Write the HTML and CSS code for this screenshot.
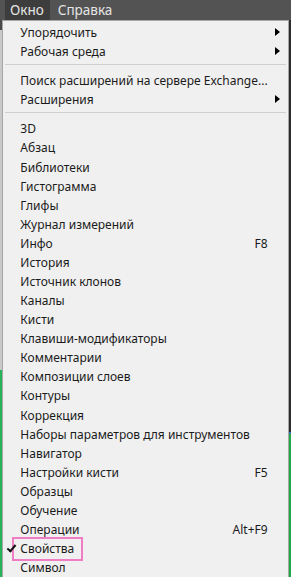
FILE: index.html
```html
<!DOCTYPE html>
<html lang="ru">
<head>
  <meta charset="UTF-8">
  <meta name="viewport" content="width=device-width, initial-scale=1.0">
  <title>Окно</title>
  <link rel="stylesheet" href="styles.css">
</head>
<body>
  <div class="menubar">
    <span class="menubar-item active">Окно</span>
    <span class="menubar-item">Справка</span>
  </div>

  <div class="stage">
    <div class="edge-left"></div>

    <ul class="menu">
      <li class="item sub">Упорядочить</li>
      <li class="item sub">Рабочая среда</li>
      <li class="sep"></li>
      <li class="item">Поиск расширений на сервере Exchange...</li>
      <li class="item sub">Расширения</li>
      <li class="sep"></li>
      <li class="item">3D</li>
      <li class="item">Абзац</li>
      <li class="item">Библиотеки</li>
      <li class="item">Гистограмма</li>
      <li class="item">Глифы</li>
      <li class="item">Журнал измерений</li>
      <li class="item">Инфо<span class="key">F8</span></li>
      <li class="item">История</li>
      <li class="item">Источник клонов</li>
      <li class="item">Каналы</li>
      <li class="item">Кисти</li>
      <li class="item">Клавиши-модификаторы</li>
      <li class="item">Комментарии</li>
      <li class="item">Композиции слоев</li>
      <li class="item">Контуры</li>
      <li class="item">Коррекция</li>
      <li class="item">Наборы параметров для инструментов</li>
      <li class="item">Навигатор</li>
      <li class="item">Настройки кисти<span class="key">F5</span></li>
      <li class="item">Образцы</li>
      <li class="item">Обучение</li>
      <li class="item">Операции<span class="key">Alt+F9</span></li>
      <li class="item checked"><span class="mark">Свойства</span></li>
      <li class="item">Символ</li>
    </ul>

    <div class="edge-right"></div>
  </div>
</body>
</html>
```

FILE: styles.css
```css
body {
  margin: 0;
  background: #3a3a3a;
  font-family: "Noto Sans", "Open Sans", sans-serif;
  font-size: 12px;
  overflow: hidden;
}
.menubar {
  height: 20px;
  background: #535353;
  display: flex;
  padding-left: 5px;
  color: #e6e6e6;
  font-size: 13.5px;
  line-height: 20px;
}
.menubar-item {
  padding: 0 6px 0 8px;
}
.menubar-item.active {
  background: #3d3d3d;
  padding: 0 6px 0 5px;
}
.stage {
  display: flex;
  height: 557px;
}
.edge-left {
  width: 3px;
  background: linear-gradient(#4a4a4a 0, #4a4a4a 10px, #c8c8c8 10px, #c8c8c8 350px, #27b35a 350px);
}
.edge-right {
  width: 3px;
  background: linear-gradient(#2c2c2c 0, #2c2c2c 412px, #3b6fb0 412px, #3b6fb0 414px, #1faa45 414px);
}
.menu {
  flex: 1;
  list-style: none;
  margin: 0;
  padding: 2px 0 0 0;
  background: #f0f0f0;
  border: 1px solid #a6a6a6;
  border-bottom: none;
  color: #1b1b1b;
}
.item {
  position: relative;
  height: 19.08px;
  line-height: 19px;
  padding: 0 20px 0 17px;
  display: flex;
  justify-content: space-between;
  align-items: center;
  white-space: nowrap;
}
.sub::after {
  content: "";
  position: absolute;
  right: 8px;
  top: 5px;
  border-left: 5px solid #000;
  border-top: 4px solid transparent;
  border-bottom: 4px solid transparent;
}
.sep {
  height: 1px;
  background: #cfcfcf;
  margin: 3px 2px 6px 2px;
}
.checked::before {
  content: "";
  position: absolute;
  left: 6px;
  top: 4px;
  width: 3px;
  height: 7px;
  border-right: 2px solid #111;
  border-bottom: 2px solid #111;
  transform: rotate(40deg);
}
.mark {
  display: inline-block;
  line-height: 18px;
  height: 18px;
  outline: 2px solid #f07cc4;
  outline-offset: 1px;
  padding: 0 6px 0 5px;
  margin-left: -5px;
}
```
